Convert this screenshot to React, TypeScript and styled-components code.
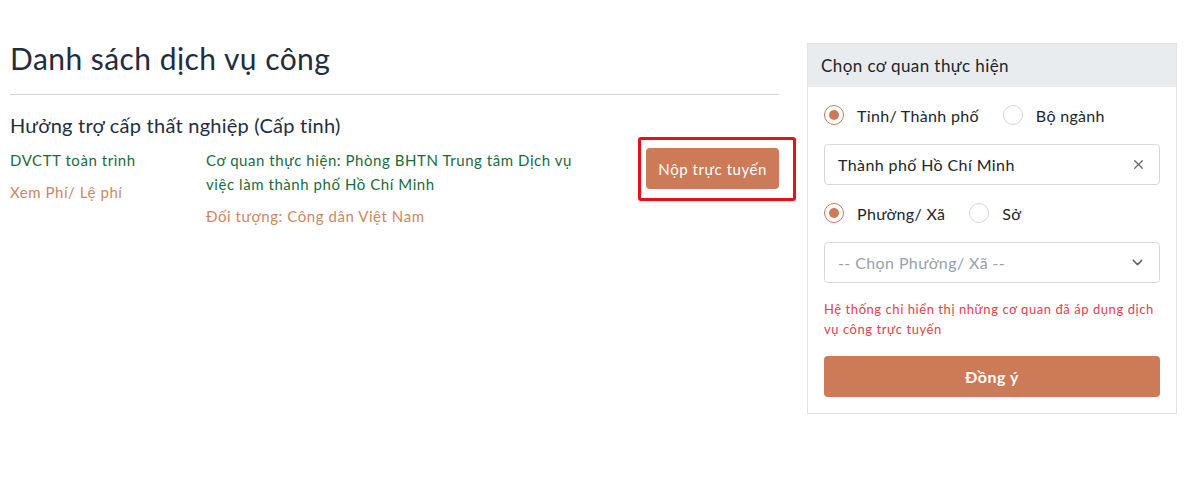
import styled, { createGlobalStyle } from "styled-components";
import { FiChevronDown, FiX } from "react-icons/fi";

const GlobalStyle = createGlobalStyle`
  * { box-sizing: border-box; }
  body {
    margin: 0;
    background: #fff;
    font-family: "Lato", "Noto Sans", sans-serif;
    letter-spacing: 0.035em;
    color: #212529;
  }
`;

const Page = styled.div`
  display: flex;
  align-items: flex-start;
  gap: 29px;
  padding: 0 9px 0 10px;
`;

const Main = styled.main`
  width: 769px;
  padding-top: 40px;
`;

const Title = styled.h1`
  margin: 0;
  font-size: 30px;
  line-height: 36px;
  font-weight: 400;
  letter-spacing: 0.015em;
  color: #1f2d3d;
`;

const Divider = styled.hr`
  margin: 18px 0 0;
  border: none;
  border-top: 1px solid #d3d6da;
`;

const ServiceName = styled.h2`
  margin: 18px 0 11px;
  font-size: 20px;
  line-height: 24px;
  font-weight: 400;
  letter-spacing: 0.012em;
  color: #1f2d3d;
`;

const ServiceRow = styled.div`
  display: grid;
  grid-template-columns: 196px 390px 1fr;
  align-items: start;
  font-size: 15px;
  line-height: 24px;
`;

const Info = styled.div`
  display: flex;
  flex-direction: column;
  gap: 8px;
`;

const Line = styled.div<{ $tone: "green" | "orange" }>`
  color: ${({ $tone }) => ($tone === "green" ? "#1a6b3c" : "#d0855f")};
`;

const Actions = styled.div`
  display: flex;
  justify-content: flex-end;
  align-items: flex-start;
`;

const Highlight = styled.div`
  position: relative;
  &::after {
    content: "";
    position: absolute;
    top: -11px;
    left: -8px;
    right: -17px;
    bottom: -12px;
    border: 3px solid #e4111b;
    border-radius: 3px;
    pointer-events: none;
  }
`;

const SubmitButton = styled.button<{ $block?: boolean }>`
  display: block;
  width: ${({ $block }) => ($block ? "100%" : "auto")};
  height: 41px;
  padding: 0 12px;
  border: none;
  border-radius: 4px;
  background: #cc7a58;
  color: #fff;
  font-family: inherit;
  letter-spacing: inherit;
  font-size: ${({ $block }) => ($block ? "16px" : "15px")};
  font-weight: ${({ $block }) => ($block ? 700 : 400)};
  cursor: pointer;
`;

const Card = styled.aside`
  width: 370px;
  margin-top: 43px;
  margin-left: -1px;
  border: 1px solid #dfe2e5;
`;

const CardHeader = styled.div`
  height: 43px;
  display: flex;
  align-items: center;
  padding: 0 13px;
  background: #e9ecee;
  font-size: 17px;
  letter-spacing: 0.025em;
  color: #212529;
`;

const CardBody = styled.div`
  padding: 16px;
  display: flex;
  flex-direction: column;
`;

const RadioGroup = styled.div`
  display: flex;
  align-items: center;
  gap: 24px;
  height: 24px;
  margin-bottom: 17px;
`;

const RadioLabel = styled.label`
  display: flex;
  align-items: center;
  gap: 13px;
  font-size: 16px;
  letter-spacing: 0.02em;
  color: #212529;
`;

const RadioDot = styled.span<{ $checked?: boolean }>`
  width: 20px;
  height: 20px;
  border-radius: 50%;
  border: 1px solid ${({ $checked }) => ($checked ? "#cc7a58" : "#d3d6da")};
  display: flex;
  align-items: center;
  justify-content: center;
  &::after {
    content: "";
    width: 10px;
    height: 10px;
    border-radius: 50%;
    background: ${({ $checked }) => ($checked ? "#cc7a58" : "transparent")};
  }
`;

const Field = styled.div<{ $placeholder?: boolean }>`
  height: 41px;
  display: flex;
  align-items: center;
  justify-content: space-between;
  padding: 0 13px;
  border: 1px solid #d6d9dc;
  border-radius: 4px;
  font-size: 16px;
  letter-spacing: 0.025em;
  color: ${({ $placeholder }) => ($placeholder ? "#9aa0a8" : "#212529")};
  margin-bottom: 16px;
  svg {
    color: #60666d;
    flex-shrink: 0;
  }
`;

const Note = styled.p`
  margin: 0 0 17px;
  font-size: 13px;
  line-height: 20px;
  color: #e5404f;
`;

const Radio = ({ label, checked }: { label: string; checked?: boolean }) => (
  <RadioLabel>
    <RadioDot $checked={checked} />
    {label}
  </RadioLabel>
);

export default function App() {
  return (
    <>
      <GlobalStyle />
      <Page>
        <Main>
          <Title>Danh sách dịch vụ công</Title>
          <Divider />
          <ServiceName>Hưởng trợ cấp thất nghiệp (Cấp tỉnh)</ServiceName>
          <ServiceRow>
            <Info>
              <Line $tone="green">DVCTT toàn trình</Line>
              <Line $tone="orange">Xem Phí/ Lệ phí</Line>
            </Info>
            <Info>
              <Line $tone="green">
                Cơ quan thực hiện: Phòng BHTN Trung tâm Dịch vụ việc làm thành
                phố Hồ Chí Minh
              </Line>
              <Line $tone="orange">Đối tượng: Công dân Việt Nam</Line>
            </Info>
            <Actions>
              <Highlight>
                <SubmitButton>Nộp trực tuyến</SubmitButton>
              </Highlight>
            </Actions>
          </ServiceRow>
        </Main>
        <Card>
          <CardHeader>Chọn cơ quan thực hiện</CardHeader>
          <CardBody>
            <RadioGroup>
              <Radio label="Tỉnh/ Thành phố" checked />
              <Radio label="Bộ ngành" />
            </RadioGroup>
            <Field>
              Thành phố Hồ Chí Minh
              <FiX size={15} />
            </Field>
            <RadioGroup>
              <Radio label="Phường/ Xã" checked />
              <Radio label="Sở" />
            </RadioGroup>
            <Field $placeholder>
              -- Chọn Phường/ Xã --
              <FiChevronDown size={17} />
            </Field>
            <Note>
              Hệ thống chỉ hiển thị những cơ quan đã áp dụng dịch vụ công trực
              tuyến
            </Note>
            <SubmitButton $block>Đồng ý</SubmitButton>
          </CardBody>
        </Card>
      </Page>
    </>
  );
}
